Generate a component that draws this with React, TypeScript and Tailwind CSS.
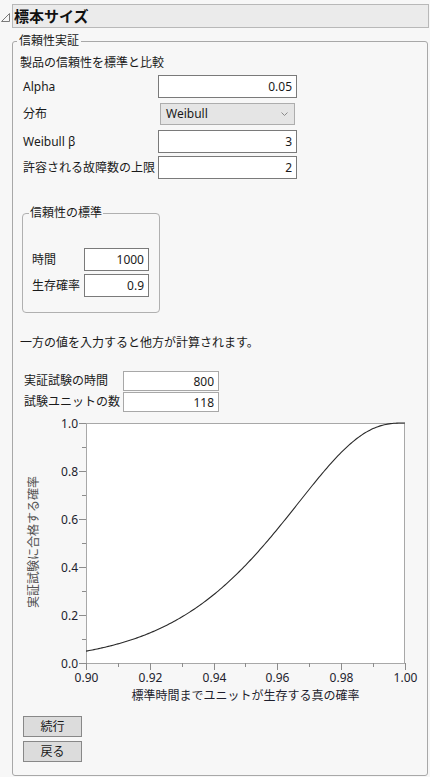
import React from "react";

const W0 = 66;
const W1 = 385;
const H0 = 10;
const H1 = 250;

const passProb = (p: number) => {
  // R(800) from R(1000) = p with Weibull beta 3
  const q = 1 - Math.pow(p, Math.pow(0.8, 3));
  const n = 118;
  const a = Math.pow(1 - q, n);
  const b = n * q * Math.pow(1 - q, n - 1);
  const c = ((n * (n - 1)) / 2) * q * q * Math.pow(1 - q, n - 2);
  return a + b + c;
};

const xOf = (p: number) => W0 + ((p - 0.9) / 0.1) * (W1 - W0);
const yOf = (v: number) => H1 - v * (H1 - H0);

const curve = Array.from({ length: 201 }, (_, i) => {
  const p = 0.9 + (i / 200) * 0.1;
  return `${xOf(p).toFixed(2)},${yOf(passProb(p)).toFixed(2)}`;
}).join(" ");

const Field = ({ value, className }: { value: string; className: string }) => (
  <input
    readOnly
    value={value}
    className={`block border bg-white text-right text-[12px] text-[#1a1a1a] outline-none ${className}`}
  />
);

const Chart = () => {
  const yTicks = [0, 0.1, 0.2, 0.3, 0.4, 0.5, 0.6, 0.7, 0.8, 0.9, 1];
  const xTicks = [0.9, 0.91, 0.92, 0.93, 0.94, 0.95, 0.96, 0.97, 0.98, 0.99, 1];
  return (
    <svg width={400} height={293} className="mt-[1px] block">
      <rect x={W0 + 0.5} y={H0 + 0.5} width={W1 - W0 - 1} height={H1 - H0} fill="#fff" stroke="#a8a8a8" />
      {yTicks.map((t, i) => {
        const y = Math.round(yOf(t)) + 0.5;
        const major = i % 2 === 0;
        return (
          <g key={`y${i}`}>
            <line x1={major ? W0 - 7 : W0 - 4} x2={W0} y1={y} y2={y} stroke="#8c8c8c" />
            {major && (
              <text x={58} y={y + 4.5} textAnchor="end" fontSize={12} fill="#1e1e2e">
                {t.toFixed(1)}
              </text>
            )}
          </g>
        );
      })}
      {xTicks.map((t, i) => {
        const x = Math.round(xOf(t)) + 0.5;
        const major = i % 2 === 0;
        return (
          <g key={`x${i}`}>
            <line x1={x} x2={x} y1={H1} y2={major ? H1 + 7 : H1 + 4} stroke="#8c8c8c" />
            {major && (
              <text x={x} y={268.5} textAnchor="middle" fontSize={12} fill="#1e1e2e">
                {t.toFixed(2)}
              </text>
            )}
          </g>
        );
      })}
      <polyline points={curve} fill="none" stroke="#2a2a2a" strokeWidth={1.1} />
      <text x={225.5} y={287} textAnchor="middle" fontSize={12} fill="#1e1e2e">
        標準時間までユニットが生存する真の確率
      </text>
      <text
        x={0}
        y={0}
        textAnchor="middle"
        fontSize={12}
        fill="#505050"
        transform="translate(17.5 129) rotate(-90)"
      >
        実証試験に合格する確率
      </text>
    </svg>
  );
};

export default function App() {
  return (
    <div className="h-[777px] w-[430px] overflow-hidden bg-[#f7f7f7] font-['Noto_Sans','Noto_Sans_CJK_JP',sans-serif] text-[12px] leading-[16px] text-[#1a1a1a]">
      <div className="flex items-center pt-[4px]">
        <svg width={12} height={24} className="block">
          <polygon points="9.5,9.5 9.5,17.5 1.5,17.5" fill="none" stroke="#7a7a7a" />
        </svg>
        <div className="flex h-[24px] w-[417px] items-center border border-[#b8b8b8] bg-[#ebebeb] pl-[1px] text-[15px] font-bold text-[#111]">
          標本サイズ
        </div>
      </div>

      <fieldset className="ml-[12px] mt-[5px] h-[743px] w-[416px] rounded-[3px] border border-[#a8a8a8] pl-[7px]">
        <legend className="-ml-[3px] px-[2px] leading-[16px]">信頼性実証</legend>
        <p className="mt-[6px]">製品の信頼性を標準と比較</p>

        <div className="mt-[4px] flex items-center">
          <span className="w-[138px] pl-[3px]">Alpha</span>
          <Field value="0.05" className="h-[23px] w-[139px] border-[#7a7a7a] pr-[4px]" />
        </div>
        <div className="mt-[5px] flex items-center">
          <span className="w-[140px] pl-[3px]">分布</span>
          <div className="flex h-[22px] w-[135px] items-center justify-between border border-[#adadad] bg-[#e5e5e5] pl-[5px] pr-[6px]">
            <span>Weibull</span>
            <svg width={7} height={5} className="block">
              <polyline points="0.5,0.5 3.5,3.5 6.5,0.5" fill="none" stroke="#8a8a8a" />
            </svg>
          </div>
        </div>
        <div className="mt-[5px] flex items-center">
          <span className="w-[138px] pl-[3px]">Weibull β</span>
          <Field value="3" className="h-[23px] w-[139px] border-[#7a7a7a] pr-[4px]" />
        </div>
        <div className="mt-[3px] flex items-center">
          <span className="w-[138px] pl-[3px]">許容される故障数の上限</span>
          <Field value="2" className="h-[23px] w-[139px] border-[#7a7a7a] pr-[4px]" />
        </div>

        <fieldset className="ml-[2px] mt-[26px] h-[108px] w-[138px] rounded-[4px] border border-[#b0b0b0] pl-[9px]">
          <legend className="-ml-[3px] px-[1px] leading-[16px]">信頼性の標準</legend>
          <div className="mt-[27px] flex items-center">
            <span className="w-[52px]">時間</span>
            <Field value="1000" className="h-[23px] w-[65px] border-[#7a7a7a] pr-[4px]" />
          </div>
          <div className="mt-[3px] flex items-center">
            <span className="w-[52px]">生存確率</span>
            <Field value="0.9" className="h-[23px] w-[65px] border-[#7a7a7a] pr-[4px]" />
          </div>
        </fieldset>

        <p className="mt-[22px]">一方の値を入力すると他方が計算されます。</p>

        <div className="mt-[20px] flex items-center">
          <span className="w-[103px] pl-[4px]">実証試験の時間</span>
          <Field value="800" className="h-[20px] w-[96px] border-[#a8a8a8] pr-[4px]" />
        </div>
        <div className="mt-[1px] flex items-center">
          <span className="w-[103px] pl-[4px]">試験ユニットの数</span>
          <Field value="118" className="h-[20px] w-[96px] border-[#a8a8a8] pr-[4px]" />
        </div>

        <Chart />

        <div className="ml-[3px] mt-[10px] flex flex-col gap-[4px]">
          <button className="h-[21px] w-[59px] border border-[#888] bg-[#dcdcdc] text-[12px] leading-[16px]">続行</button>
          <button className="h-[21px] w-[59px] border border-[#888] bg-[#dcdcdc] text-[12px] leading-[16px]">戻る</button>
        </div>
      </fieldset>
    </div>
  );
}
